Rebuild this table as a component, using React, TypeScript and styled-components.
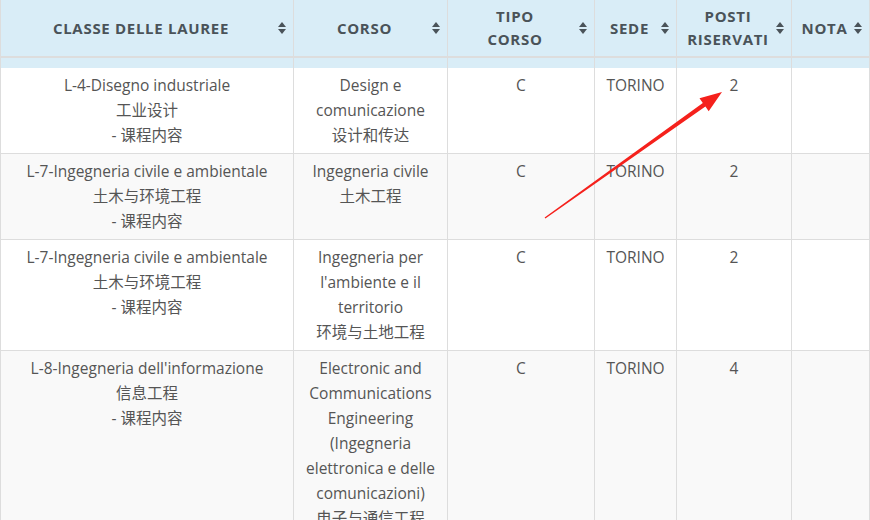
import styled, { createGlobalStyle } from "styled-components";

const GlobalStyle = createGlobalStyle`
  html, body {
    margin: 0;
    padding: 0;
    background: #fff;
  }
  body {
    font-family: "Open Sans", "Noto Sans CJK SC", sans-serif;
    overflow: hidden;
  }
`;

const Page = styled.div`
  position: relative;
  width: 870px;
  height: 520px;
  overflow: hidden;
`;

const Table = styled.table`
  width: 869px;
  table-layout: fixed;
  border-collapse: collapse;
  font-size: 15.5px;
  line-height: 25px;
  color: #555;
`;

const Col = styled.col<{ $w: number }>`
  width: ${(p) => p.$w}px;
`;

const HeadCell = styled.th`
  position: relative;
  background: #d9edf7;
  color: #4a5359;
  font-weight: 700;
  font-size: 15px;
  line-height: 23px;
  letter-spacing: 0.7px;
  text-transform: uppercase;
  white-space: pre-line;
  text-align: center;
  vertical-align: middle;
  padding: 5px 20px 5px 8px;
  height: 46px;
  border: 1px solid #ddd;
  border-top: 0;
  border-bottom: 2px solid #ddd;
`;

const SortIcon = styled.svg`
  position: absolute;
  right: 7px;
  top: 50%;
  margin-top: -6px;
  width: 8px;
  height: 12px;
  fill: #4a5359;
`;

const StripCell = styled.td`
  background: #d9edf7;
  height: 10px;
  padding: 0;
  border-left: 1px solid #ddd;
  border-right: 1px solid #ddd;
`;

const Row = styled.tr<{ $striped: boolean }>`
  background: ${(p) => (p.$striped ? "#f9f9f9" : "#fff")};
`;

const Cell = styled.td`
  padding: 5px 8px;
  text-align: center;
  vertical-align: top;
  border: 1px solid #ddd;
  border-top: 0;
`;

const Line = styled.div``;

const ArrowLayer = styled.svg`
  position: absolute;
  left: 0;
  top: 0;
  width: 870px;
  height: 520px;
  pointer-events: none;
`;

const columns = [
  { label: "Classe delle lauree", w: 293 },
  { label: "Corso", w: 154 },
  { label: "Tipo\ncorso", w: 147 },
  { label: "Sede", w: 82 },
  { label: "Posti\nriservati", w: 115 },
  { label: "Nota", w: 78 },
];

const rows = [
  {
    classe: ["L-4-Disegno industriale", "工业设计", "- 课程内容"],
    corso: ["Design e comunicazione", "设计和传达"],
    posti: "2",
  },
  {
    classe: ["L-7-Ingegneria civile e ambientale", "土木与环境工程", "- 课程内容"],
    corso: ["Ingegneria civile", "土木工程"],
    posti: "2",
  },
  {
    classe: ["L-7-Ingegneria civile e ambientale", "土木与环境工程", "- 课程内容"],
    corso: ["Ingegneria per l'ambiente e il territorio", "环境与土地工程"],
    posti: "2",
  },
  {
    classe: ["L-8-Ingegneria dell'informazione", "信息工程", "- 课程内容"],
    corso: [
      "Electronic and Communications Engineering (Ingegneria elettronica e delle comunicazioni)",
      "电子与通信工程",
    ],
    posti: "4",
  },
];

const Sort = () => (
  <SortIcon viewBox="0 0 8 12">
    <path d="M4 0 L8 5 L0 5 Z" />
    <path d="M0 7 L8 7 L4 12 Z" />
  </SortIcon>
);

const App = () => {
  return (
    <Page>
      <GlobalStyle />
      <Table>
        <colgroup>
          {columns.map((c) => (
            <Col key={c.label} $w={c.w} />
          ))}
        </colgroup>
        <thead>
          <tr>
            {columns.map((c) => (
              <HeadCell key={c.label}>
                {c.label}
                <Sort />
              </HeadCell>
            ))}
          </tr>
          <tr>
            {columns.map((c) => (
              <StripCell key={c.label} />
            ))}
          </tr>
        </thead>
        <tbody>
          {rows.map((r, i) => (
            <Row key={i} $striped={i % 2 === 1}>
              <Cell>
                {r.classe.map((l) => (
                  <Line key={l}>{l}</Line>
                ))}
              </Cell>
              <Cell>
                {r.corso.map((l) => (
                  <Line key={l}>{l}</Line>
                ))}
              </Cell>
              <Cell>C</Cell>
              <Cell>TORINO</Cell>
              <Cell>{r.posti}</Cell>
              <Cell />
            </Row>
          ))}
        </tbody>
      </Table>
      {/* annotation arrow drawn over the table */}
      <ArrowLayer viewBox="0 0 870 520">
        <polygon
          fill="#f5211c"
          points="545.4,218.6 705.4,106.6 708.7,111.3 722,92 699.5,98.3 702.8,103 544.6,217.4"
        />
      </ArrowLayer>
    </Page>
  );
};

export default App;
